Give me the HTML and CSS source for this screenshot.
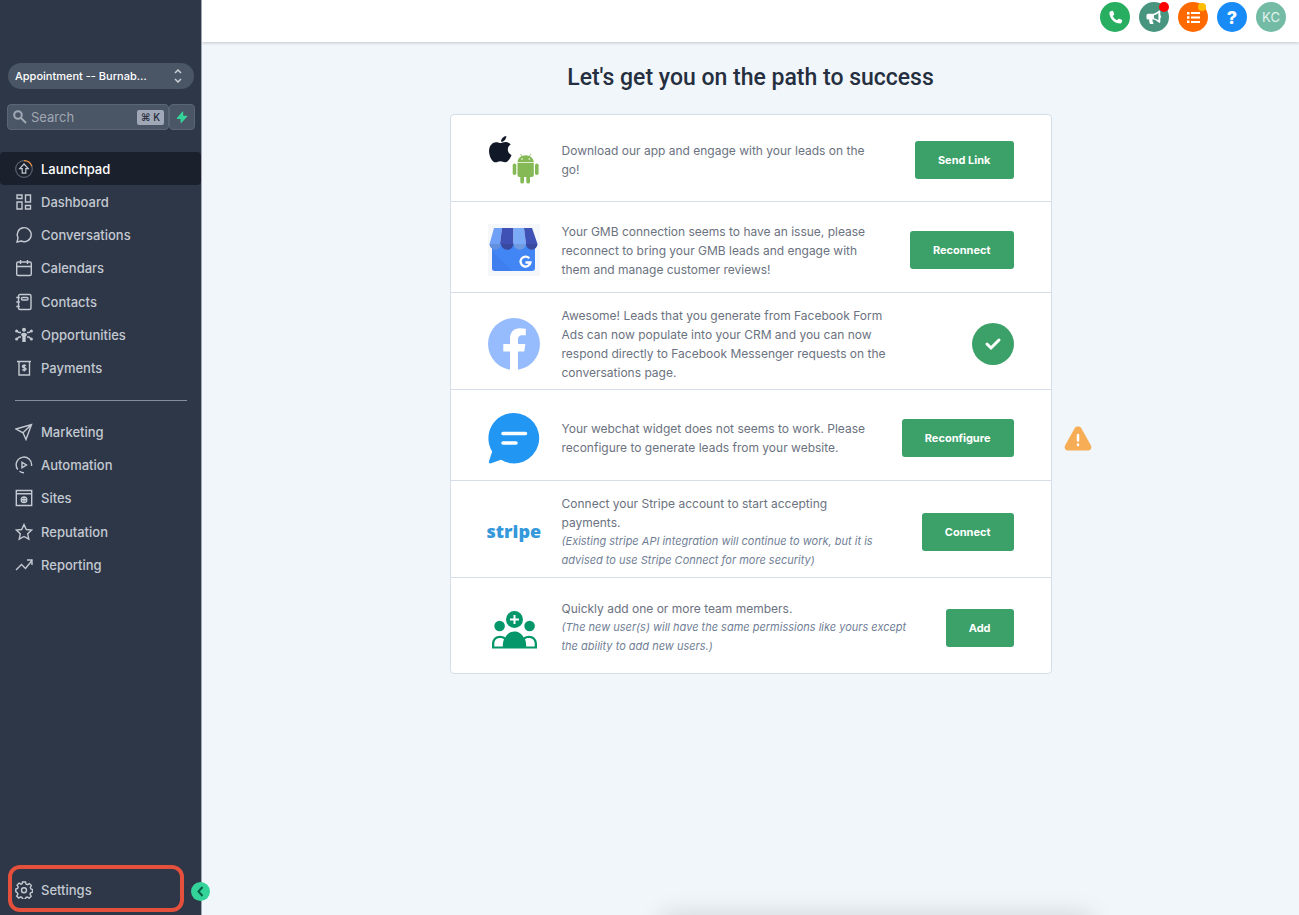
FILE: index.html
```html
<!DOCTYPE html>
<html lang="en">
<head>
    <meta charset="utf-8">
    <title>Launchpad</title>
    <link rel="stylesheet" href="styles.css">
</head>

<body>
    <aside class="sidebar">
        <div class="location">
            <select class="location-select" aria-label="Location">
                <option>Appointment -- Burnab…</option>
            </select>
            <svg class="location-arrows" width="8" height="14" viewBox="0 0 8 14"><path d="M1 4l3-3 3 3M1 10l3 3 3-3"/></svg>
        </div>

        <div class="search-row">
            <label class="search">
                <svg width="14" height="14" viewBox="0 0 14 14"><circle cx="5" cy="5" r="3.8"/><path d="M8 8l5 5"/></svg>
                <input type="text" placeholder="Search" aria-label="Search">
                <kbd>⌘ K</kbd>
            </label>
            <button class="bolt" aria-label="Quick actions">
                <svg width="12" height="13" viewBox="0 0 12 13"><path d="M7.2.8v4h3.6c.5 0 .6.5.3.9L5.3 12c-.3.3-.7.1-.7-.3V8H1.2c-.5 0-.7-.5-.3-.9L6.4.6c.3-.3.8-.2.8.2z"/></svg>
            </button>
        </div>

        <nav>
            <ul class="menu menu-main">
                <li><a href="#" class="active">
                    <svg class="icon launch" viewBox="0 0 18 18"><circle cx="9" cy="9" r="8.3" stroke="#59616f"/><path d="M9 .7a8.300 8.300 0 0 1 7.900 5.700" stroke="#ed8936"/><path d="M9 4l4.300 4.600h-2.500v4.600H7.200V8.600H4.700z" stroke="#c4c9d1"/></svg>
                    Launchpad</a></li>
                <li><a href="#">
                    <svg class="icon" viewBox="0 0 18 18"><path d="M2 2h5v3.500H2zM10.500 2h5v7h-5zM2 9h5v7H2zM10.500 12.500h5V16h-5z"/></svg>
                    Dashboard</a></li>
                <li><a href="#">
                    <svg class="icon" viewBox="0 0 18 18"><path d="M2 16l1-4.100A7 7 0 1 1 6.200 15z"/></svg>
                    Conversations</a></li>
                <li><a href="#">
                    <svg class="icon" viewBox="0 0 18 18"><rect x="1.700" y="3" width="14.600" height="13.500" rx="1.500"/><path d="M1.700 7.500h14.600M5.500 1v4M12.500 1v4"/></svg>
                    Calendars</a></li>
                <li><a href="#">
                    <svg class="icon" viewBox="0 0 18 18"><rect x="3.500" y="1.500" width="12.500" height="15" rx="1.500"/><rect x="6.500" y="4.500" width="6.500" height="2.500" rx="1"/><path d="M1.300 4.500h3.500M1.300 9h3.500M1.300 13.500h3.500"/></svg>
                    Contacts</a></li>
                <li><a href="#">
                    <svg class="icon solid" viewBox="0 0 18 18"><circle cx="9" cy="3.800" r="2"/><path d="M6 9c0-3 6-3 6 0l-1.300 1.500V16H7.300v-5.500z"/><circle cx="1.600" cy="5" r="1.500"/><circle cx="1.600" cy="13" r="1.500"/><circle cx="16.400" cy="5" r="1.500"/><circle cx="16.400" cy="13" r="1.500"/><path class="line" d="M2 5l2 1.500h2M2 13l2-2h2M16 5l-2 1.500h-2M16 13l-2-2h-2"/></svg>
                    Opportunities</a></li>
                <li><a href="#">
                    <svg class="icon" viewBox="0 0 18 18"><path d="M2 2.500h14M4 2.500v13.500h10.500V2.500"/><path d="M11 6.800c-.8-.8-3.600-.8-3.600.7 0 1.700 3.700.8 3.700 2.500 0 1.500-3 1.500-3.900.6M9.200 5.200v7.200"/></svg>
                    Payments</a></li>
            </ul>
            <hr>
            <ul class="menu menu-tools">
                <li><a href="#">
                    <svg class="icon" viewBox="0 0 18 18"><path d="M1 6l15.500-4.500L11 16.500 8 9.800zM8 9.800l8.500-8.300"/></svg>
                    Marketing</a></li>
                <li><a href="#">
                    <svg class="icon" viewBox="0 0 18 18"><path d="M9 16.700a7.700 7.700 0 0 1-4.500-1.500M2.800 13.500A7.700 7.700 0 1 1 16.500 10"/><path d="M7 6.300l4.500 2.700L7 11.700z"/></svg>
                    Automation</a></li>
                <li><a href="#">
                    <svg class="icon" viewBox="0 0 18 18"><path d="M1.300 1.500h15.400v15H1.300zM1.300 4.800h15.400"/><circle cx="9" cy="10.800" r="2.800"/><path d="M6.500 10.800h5M9 8v5.500"/></svg>
                    Sites</a></li>
                <li><a href="#">
                    <svg class="icon" viewBox="0 0 18 18"><path d="M9 1.500l2.300 5 5.400.6-4 3.700 1.100 5.400L9 13.500l-4.800 2.700 1.100-5.400-4-3.700 5.400-.6z"/></svg>
                    Reputation</a></li>
                <li><a href="#">
                    <svg class="icon" viewBox="0 0 18 18"><path d="M1 14l5.500-5.500 4 4 6.500-8M12 4h5v5"/></svg>
                    Reporting</a></li>
            </ul>
        </nav>

        <a href="#" class="settings">
            <svg class="icon" viewBox="0 0 18 18"><path d="M7.500 1h3l.5 2.100 1.500.6 1.900-1.100 2 2-1.100 1.900.6 1.500 1.600.5v2.700l-1.900.6-.6 1.500 1.200 1.900-2 2-1.900-1.200-1.500.6-.5 1.600h-2.700l-.5-1.700-1.500-.6-1.900 1.200-2-2 1.200-1.900-.6-1.500L.8 10.700V8l1.800-.5.6-1.500-1.100-1.900 2-2L6 3.200l1.100-.5z"/><circle cx="9" cy="9.200" r="2.500"/></svg>
            Settings
        </a>
        <button class="collapse" aria-label="Collapse menu">
            <svg width="7" height="11" viewBox="0 0 7 11"><path d="M5.500 1L1.500 5.500l4 4.500"/></svg>
        </button>
    </aside>

    <div class="page">
        <header class="topbar">
            <button class="round phone" aria-label="Phone">
                <svg width="15" height="15" viewBox="0 0 16 16"><path fill="#fff" d="M2.300 1.600l2.100-.7c.5-.2 1 .1 1.200.6l1 2.500c.2.400.1.900-.3 1.200L5 6.300a10 10 0 0 0 4.700 4.700l1.100-1.300c.3-.4.800-.5 1.200-.3l2.500 1c.5.200.8.700.6 1.200l-.7 2.100c-.2.500-.6.800-1.100.8C6.800 14.500 1.500 9.200 1.500 2.700c0-.5.300-.9.800-1.100z"/></svg>
            </button>
            <button class="round news" aria-label="Announcements">
                <svg width="16" height="15" viewBox="0 0 16 15"><path fill="#fff" fill-rule="evenodd" d="M13.500.5c.5 0 .8.3.8.8v4c1.200.5 1.200 2.300 0 2.800v4c0 .7-.7 1-1.200.6l-2.300-1.800A7 7 0 0 0 6.500 9.600c-.2 1.400.1 2.300.9 3.300.3.400 0 1.100-.6 1.100H4.500c-.3 0-.6-.2-.7-.4-.6-1.300-.8-2.600-.6-4H2A1.500 1.500 0 0 1 .5 8.100V5.300A1.500 1.500 0 0 1 2 3.800h4.500c1.500 0 3-.6 4.300-1.500L13 .6zm-1.100 2.400A9 9 0 0 1 8 5.200v3c1.700.3 3.100 1 4.400 2.100z"/></svg>
                <span class="dot"></span>
            </button>
            <button class="round list" aria-label="Tasks">
                <svg width="15" height="13" viewBox="0 0 15 13"><path fill="#fff" d="M1 1h2.500v2.500H1zM5 1h9v2H5zM1 5.300h2.500v2.500H1zM5 5.500h9v2H5zM1 9.600h2.500v2.500H1zM5 10h9v2H5z"/></svg>
                <span class="dot"></span>
            </button>
            <button class="round help">?</button>
            <button class="round user">KC</button>
        </header>

        <main>
            <h1>Let's get you on the path to success</h1>
            <div class="card">
                <section class="step first">
                    <svg class="logo" viewBox="0 0 54 54">
                        <path fill="#111827" d="M19.300 3c.1 3-2.300 5.800-5.200 5.800C13.900 6 16.400 3.300 19.300 3zM2.200 16c.7-4.600 4.600-7.600 8-6.700 2.500.8 3.200 1 5.400.2 3-1.100 6-.5 8.100 2.100-4.300 2.600-3.600 8.600.8 10.500-1.200 3.400-3.700 7.400-6.300 7.200-2-.2-2.600-1.100-4.800-1.100s-2.900 1-4.700 1.100C4.400 29.400 1.300 21 2.200 16z"/>
                        <g fill="#84b955">
                            <path d="M30.500 29.200c.2-3.400 2.200-5.200 4-6L33.200 21l.5-.3 1.500 2.200c2.400-.8 4.600-.8 7 0l1.500-2.200.5.3-1.400 2.200c2.200 1.200 3.800 3.200 4 6zM30.500 30h16.300v12c0 1.200-.8 2-2 2H43v4.700a1.800 1.800 0 0 1-3.700 0V44H37v4.700a1.800 1.800 0 0 1-3.700 0V44h-.8c-1.200 0-2-.8-2-2z"/>
                            <rect x="25.700" y="30.500" width="3.600" height="11.500" rx="1.800"/><rect x="48" y="30.500" width="3.600" height="11.500" rx="1.800"/>
                        </g>
                        <circle cx="35" cy="26" r=".8" fill="#fff"/><circle cx="42.300" cy="26" r=".8" fill="#fff"/>
                    </svg>
                    <p>Download our app and engage with your leads on the go!</p>
                    <button class="action">Send Link</button>
                </section>

                <section class="step">
                    <svg class="logo" viewBox="0 0 54 54">
                        <path fill="#f6f7f8" d="M1 1h52v52H1z"/>
                        <path fill="#4285f4" d="M5 20h43v25a3 3 0 0 1-3 3H8a3 3 0 0 1-3-3z"/>
                        <path fill="#3b78e7" opacity=".5" d="M5 28l20 20H8a3 3 0 0 1-3-3z"/>
                        <path fill="#6ea1f5" d="M7 5h8l-2 16H2.500z"/><path fill="#3f51b5" d="M15 5h11.500v16H13z"/><path fill="#7baaf7" d="M26.500 5H37l2 16H26.500z"/><path fill="#3f51b5" d="M37 5h8l5.500 16H39z"/>
                        <path fill="#6290df" d="M2.500 21H14a5.700 5.700 0 0 1-11.500 0z"/><path fill="#3949a0" d="M14 21h12.500a6.200 5.700 0 0 1-12.500 0z"/><path fill="#709be0" d="M26.500 21H39a6.200 5.700 0 0 1-12.500 0z"/><path fill="#3949a0" d="M39 21h11.500a5.700 5.700 0 0 1-11.500 0z"/>
                        <path d="M42.300 35.200a5 5 0 1 0 1.200 4.300h-5" fill="none" stroke="#fff" stroke-width="2.300"/>
                    </svg>
                    <p>Your GMB connection seems to have an issue, please reconnect to bring your GMB leads and engage with them and manage customer reviews!</p>
                    <button class="action">Reconnect</button>
                </section>

                <section class="step tall">
                    <svg class="logo" viewBox="0 0 54 54">
                        <circle cx="27" cy="27" r="26" fill="#97bcfd"/>
                        <path fill="#fff" d="M23 53V34.500h-6.700V27H23v-5.500c0-6.600 3.900-10.300 9.900-10.300 2 0 4 .2 5.900.5v6.500h-3.300c-3.300 0-4.500 2-4.500 4.200V27h7.400l-1.200 7.500H31V53z"/>
                    </svg>
                    <p>Awesome! Leads that you generate from Facebook Form Ads can now populate into your CRM and you can now respond directly to Facebook Messenger requests on the conversations page.</p>
                    <span class="done"><svg width="18" height="14" viewBox="0 0 18 14"><path d="M3 7l4 4 8-8"/></svg></span>
                </section>

                <section class="step">
                    <svg class="logo" viewBox="0 0 54 54">
                        <path fill="#2196f3" d="M27.200 2a25.200 25.200 0 1 1-13.200 46.800L4 52.300c-1.500.5-2.600-.7-2-2l3.200-9.800A25.200 25.200 0 0 1 27.200 2z"/>
                        <path d="M16 22.500h22.500M16 32h13" fill="none" stroke="#fff" stroke-width="3.500" stroke-linecap="round"/>
                    </svg>
                    <p>Your webchat widget does not seems to work. Please reconfigure to generate leads from your website.</p>
                    <button class="action">Reconfigure</button>
                    <svg class="warning" width="28" height="25" viewBox="0 0 28 25"><path fill="#f6ad55" d="M10.500 2.500c1.500-2.600 5.500-2.600 7 0l9.300 16.800c1.300 2.300.2 5.200-2.600 5.200H3.800c-2.800 0-3.900-2.900-2.600-5.200z"/><path d="M14 9v5.500M14 18.500v.5" stroke="#fff" stroke-width="2.500" stroke-linecap="round"/></svg>
                </section>

                <section class="step tall">
                    <span class="logo stripe">stripe</span>
                    <p>Connect your Stripe account to start accepting payments.
                        <em>(Existing stripe API integration will continue to work, but it is advised to use Stripe Connect for more security)</em></p>
                    <button class="action">Connect</button>
                </section>

                <section class="step last">
                    <svg class="logo" viewBox="0 0 54 54">
                        <g fill="#059669">
                            <circle cx="27.500" cy="18.500" r="8.500"/><circle cx="12.600" cy="25" r="5.300"/><circle cx="42.600" cy="25" r="5.300"/>
                            <path d="M5 47.500V43c0-5 3.500-8.200 8-8.200 2 0 4 .7 5.300 1.700C20.500 32.300 24 30.500 27.500 30.500s7 1.800 9.200 6c1.300-1 3.300-1.700 5.300-1.700 4.500 0 8 3.200 8 8.200v4.500z"/>
                        </g>
                        <path fill="#fff" d="M7.300 45.500V43c0-4 2.500-6 5.700-6 1.600 0 3 .4 4 1.300-.9 2.200-1.200 4.700-1.200 7.200zM47.700 45.500V43c0-4-2.500-6-5.700-6-1.600 0-3 .4-4 1.300.9 2.200 1.200 4.700 1.200 7.200z"/>
                        <path d="M27.500 14v9M23 18.500h9" stroke="#fff" stroke-width="2"/>
                    </svg>
                    <p>Quickly add one or more team members.
                        <em>(The new user(s) will have the same permissions like yours except the ability to add new users.)</em></p>
                    <button class="action">Add</button>
                </section>
            </div>
        </main>
    </div>
    <div class="drawer-shadow"></div>
</body>
</html>
```
FILE: styles.css
```css
* {
    box-sizing: border-box;
}
body {
    margin: 0;
    display: grid;
    grid-template-columns: 202px 1fr;
    min-height: 100vh;
    overflow: hidden;
    background-color: #f1f6fa;
    font-family: Inter, sans-serif;
    font-size: 13px;
    color: #6b7280;
}
button {
    border: 0;
    padding: 0;
    font-family: inherit;
    cursor: pointer;
}

/* sidebar */
.sidebar {
    position: relative;
    display: flex;
    flex-direction: column;
    height: 100vh;
    padding-top: 63px;
    background-color: #2d3748;
    border-right: 1px solid #a0a7b2;
}
.sidebar svg {
    fill: none;
    stroke: currentColor;
}
.location {
    position: relative;
    margin: 0 7px 15px 8px;
}
.location-select {
    display: block;
    width: 100%;
    height: 26px;
    padding: 0 30px 0 7px;
    border: 0;
    border-radius: 13px;
    appearance: none;
    background-color: #4a5565;
    color: #fff;
    font: 500 11px Inter, sans-serif;
}
.sidebar .location-arrows {
    position: absolute;
    top: 6px;
    right: 12px;
    color: #cbd0d8;
    stroke-width: 1.5;
}
.search-row {
    display: flex;
    height: 26px;
    margin: 0 6px 22px 7px;
}
.search, .bolt {
    display: flex;
    align-items: center;
    background-color: #4a5565;
    border: 1px solid #5a6575;
    border-radius: 4px;
}
.search {
    flex: 1;
    min-width: 0;
    gap: 4px;
    padding: 0 4px 0 5px;
    color: #a0a8b4;
}
.search svg {
    stroke-width: 2;
    flex: none;
}
.search input {
    flex: 1;
    min-width: 0;
    padding: 0;
    border: 0;
    background: none;
    color: #fff;
    font: 13px Inter, sans-serif;
}
.search input::placeholder {
    color: #a0a8b4;
}
kbd {
    flex: none;
    width: 27px;
    border-radius: 2px;
    background-color: #a0a8b8;
    color: #1f2937;
    font: 500 10px/15px Inter, "DejaVu Sans", sans-serif;
    text-align: center;
    white-space: nowrap;
}
.bolt {
    flex: none;
    width: 26px;
    justify-content: center;
}
.sidebar .bolt svg {
    fill: #34d399;
    stroke: none;
}
.menu {
    display: grid;
    grid-auto-rows: 1fr;
    margin: 0;
    padding: 0;
    list-style: none;
}
.menu-main {
    height: 233px;
}
.menu-tools {
    height: 167px;
}
.menu a {
    display: flex;
    align-items: center;
    gap: 8px;
    height: 100%;
    padding-left: 15px;
    border-radius: 4px;
}
.menu a, .settings {
    color: #c4c9d1;
    font-weight: 500;
    text-decoration: none;
}
.menu .active {
    background-color: #1a202c;
    color: #fff;
}
.icon {
    width: 18px;
    height: 18px;
    flex: none;
    stroke-width: 1.4;
}
.launch {
    stroke-width: 1.2;
}
.sidebar .solid {
    fill: currentColor;
    stroke: none;
}
.solid .line {
    fill: none;
    stroke: currentColor;
}
hr {
    height: 1px;
    margin: 15px 14px 14px 15px;
    border: 0;
    background-color: #848e9c;
}
.settings {
    display: flex;
    align-items: center;
    gap: 8px;
    height: 47px;
    margin: auto 17px 3px 8px;
    padding-top: 2px;
    padding-left: 3px;
    border: 4px solid #e5503c;
    border-radius: 12px;
}
.collapse {
    position: absolute;
    right: -9px;
    bottom: 14px;
    display: flex;
    align-items: center;
    justify-content: center;
    width: 19px;
    height: 19px;
    border-radius: 50%;
    background-color: #34d399;
    color: #065f46;
}
.collapse svg {
    stroke-width: 2;
}

/* top bar */
.topbar {
    display: flex;
    justify-content: flex-end;
    gap: 9px;
    height: 42px;
    padding: 2px 13px;
    background-color: #fff;
    box-shadow: 0 1px 3px rgba(0, 0, 0, 0.2);
}
.round {
    position: relative;
    display: flex;
    align-items: center;
    justify-content: center;
    width: 30px;
    height: 30px;
    border-radius: 50%;
    color: #fff;
}
.phone {
    background-color: #27ae60;
}
.news {
    background-color: #47957f;
}
.list {
    background-color: #ff6a00;
}
.help {
    background-color: #188bf6;
    font-size: 18px;
    font-weight: 800;
}
.user {
    background-color: #73bba5;
    color: #e3f3ee;
    font-size: 13px;
}
.dot {
    position: absolute;
    top: 0;
    right: 0;
    width: 10px;
    height: 10px;
    border-radius: 50%;
    background-color: #f00;
}
.list .dot {
    right: 2px;
    width: 8px;
    height: 8px;
    top: 1px;
    background-color: #ffbc00;
}

/* launchpad steps */
main {
    padding: 21px 20px 20px;
}
h1 {
    margin: 0 0 21px;
    color: #252f3f;
    font: 500 23px/30px Roboto, sans-serif;
    text-align: center;
}
.card {
    max-width: 602px;
    margin: 0 auto;
    background-color: #fff;
    border: 1px solid #d5dee8;
    border-radius: 4px;
}
.step {
    position: relative;
    display: flex;
    align-items: center;
    min-height: 91px;
    padding: 6px 37px 0 36px;
    border-bottom: 1px solid #d5dee8;
}
.first {
    min-height: 87px;
    padding-top: 4px;
}
.tall {
    min-height: 97px;
}
.last {
    min-height: 95px;
    padding-top: 4px;
    border-bottom: 0;
}
.logo {
    width: 54px;
    height: 54px;
    flex: none;
}
.stripe {
    color: #3498db;
    font: 800 18px/52px "Open Sans", sans-serif;
    text-align: center;
}
.step p {
    flex: 1;
    max-width: 344px;
    margin: 0 36px 0 21px;
    font-size: 12px;
    line-height: 19px;
}
.last p {
    max-width: none;
}
.step em {
    display: block;
    color: #718096;
    font-size: 11px;
}
.action, .done {
    flex: none;
    margin-left: auto;
}
.action {
    height: 38px;
    padding: 0 23px;
    border-radius: 3px;
    background-color: #3ba169;
    color: #fff;
    font-size: 11px;
    font-weight: 700;
}
.done {
    display: flex;
    align-items: center;
    justify-content: center;
    width: 42px;
    height: 42px;
    border-radius: 50%;
    background-color: #3ba169;
}
.done path {
    fill: none;
    stroke: #fff;
    stroke-width: 3;
    stroke-linecap: round;
}
.warning {
    position: absolute;
    top: 36px;
    right: -41px;
}
.drawer-shadow {
    position: fixed;
    bottom: -20px;
    left: 51%;
    width: 430px;
    height: 20px;
    box-shadow: 0 0 24px rgba(0, 0, 0, 0.15);
}
```
